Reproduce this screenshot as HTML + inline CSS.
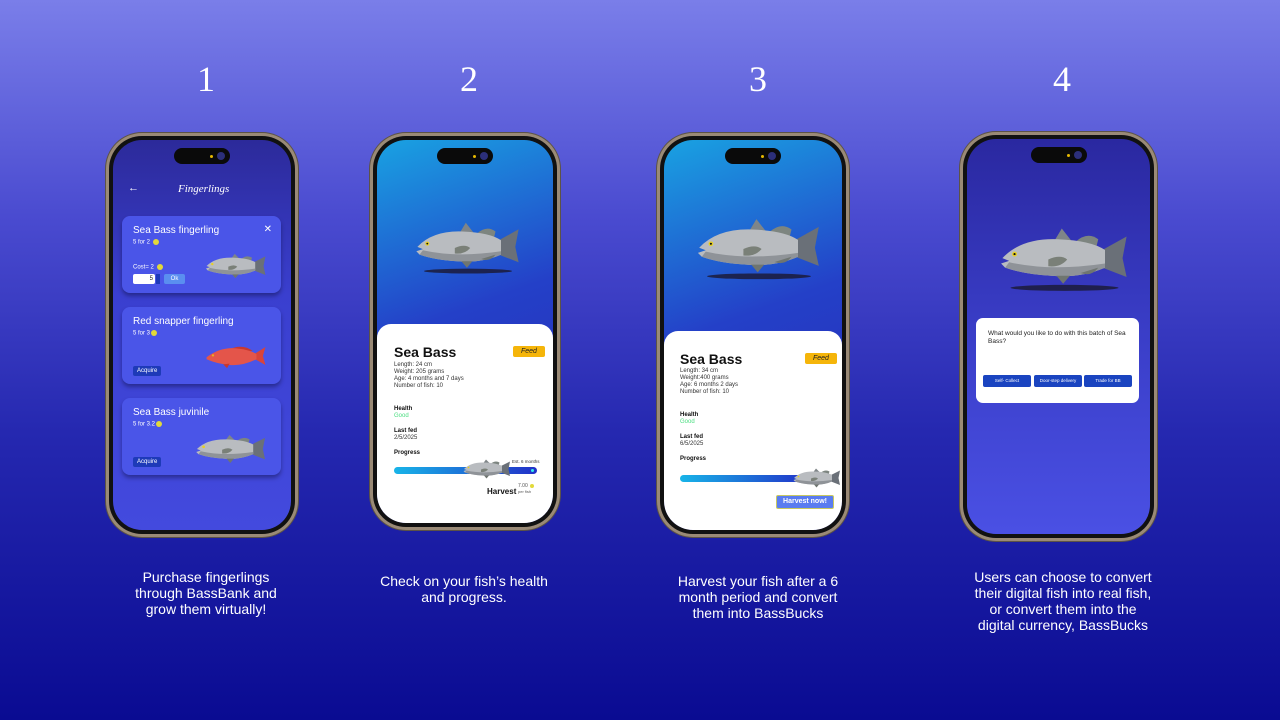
<!DOCTYPE html>
<html><head><meta charset="utf-8"><style>
*{margin:0;padding:0;box-sizing:border-box}
body{width:1280px;height:720px;overflow:hidden;position:relative;background:linear-gradient(180deg,#7a7ee9 0%,#4a4bd0 30%,#2528b0 60%,#0a0b92 100%);font-family:"Liberation Sans",sans-serif;color:#fff}
.abs{position:absolute}
.num{position:absolute;font-family:"Liberation Serif",serif;font-size:36px;color:#fff;width:100px;text-align:center;top:58px}
.cap{position:absolute;font-size:14px;line-height:16px;text-align:center;color:#fff;width:240px}
.phone{position:absolute;border-radius:36px;background:#9a8a76;padding:3px;box-shadow:0 0 0 1px #5d5346}
.bez{width:100%;height:100%;border-radius:33px;background:#111;padding:4px}
.scr{width:100%;height:100%;border-radius:29px;overflow:hidden;position:relative}
.island{position:absolute;left:50%;top:8px;width:56px;height:16px;margin-left:-28px;background:#0a0a0a;border-radius:8px}
.island:after{content:"";position:absolute;right:5px;top:4px;width:8px;height:8px;border-radius:50%;background:#2c2f7a}
.island:before{content:"";position:absolute;right:17px;top:6.5px;width:3px;height:3px;border-radius:50%;background:#e6b800}
.card{position:absolute;background:#4a55e8;border-radius:8px;box-shadow:0 3px 4px rgba(0,0,20,.35)}
.card h4{font-weight:normal;font-size:10px;position:absolute;left:11px;top:9px}
.card .s{font-size:6px;position:absolute;left:11px;top:23px}
.coin{display:inline-block;width:6px;height:6px;border-radius:50%;background:#e2d93a;vertical-align:middle;margin-left:1px}
.btn{position:absolute;background:#1e3ab8;font-size:6px;padding:2px 4px;border-radius:2px}
.wc{position:absolute;left:0;right:0;bottom:0;background:#fff;border-radius:14px 14px 0 0;color:#111}
.wc b.t{position:absolute;font-size:14px;font-weight:bold}
.wc .feed{position:absolute;background:#f5b50a;font-size:7px;font-style:italic;color:#222;padding:2px 8px;border-radius:2px}
.sm{position:absolute;font-size:6px;line-height:7px;color:#333}
.lb{position:absolute;font-size:6px;font-weight:bold;color:#111}
.good{color:#4ade80}
</style></head><body>
<svg width="0" height="0" style="position:absolute"><defs>
<symbol id="fish" viewBox="0 0 100 50">
<ellipse cx="50" cy="46" rx="40" ry="2.2" fill="#1b1b3a" opacity=".85"/>
<path d="M42 12 L48 2 L55 11Z" fill="#7f8588"/>
<path d="M58 12 Q67 4 75 10 L73 18Z" fill="#7d8580"/>
<path d="M78 18 L96 8 L93 24 L96 38 L78 31Z" fill="#6a7078"/>
<path d="M4 24 Q18 9 45 10 Q70 11 80 18 L80 31 Q62 39 40 37 Q20 36 6 31 L3 28 L9 26Z" fill="#b9bcc0"/>
<path d="M9 27 Q40 34 80 28 L80 31 Q62 39 40 37 Q20 36 6 31Z" fill="#8f9398"/>
<path d="M38 25 Q47 21 52 25 Q47 31 38 30Z" fill="#7a8078"/>
<path d="M44 37 L49 43 L54 37Z" fill="#6f7570"/>
<path d="M62 35 Q70 38 75 31Z" fill="#6f7570"/>
<circle cx="13" cy="21" r="1.8" fill="#e8d020"/><circle cx="13" cy="21" r=".8" fill="#111"/>
</symbol>
<symbol id="fishn" viewBox="0 0 100 40">
<path d="M42 9 L48 1 L55 8Z" fill="#7f8588"/>
<path d="M58 9 Q67 2 75 7 L73 14Z" fill="#7d8580"/>
<path d="M78 14 L96 5 L93 20 L96 34 L78 27Z" fill="#6a7078"/>
<path d="M4 20 Q18 6 45 7 Q70 8 80 14 L80 27 Q62 35 40 33 Q20 32 6 27 L3 24 L9 22Z" fill="#b9bcc0"/>
<path d="M9 23 Q40 30 80 24 L80 27 Q62 35 40 33 Q20 32 6 27Z" fill="#8f9398"/>
<path d="M38 21 Q47 17 52 21 Q47 27 38 26Z" fill="#7a8078"/>
<path d="M44 33 L49 39 L54 33Z" fill="#6f7570"/>
<circle cx="13" cy="17" r="1.8" fill="#e8d020"/>
</symbol>
</defs></svg>

<div class="num" style="left:156px">1</div>
<div class="num" style="left:419px">2</div>
<div class="num" style="left:708px">3</div>
<div class="num" style="left:1012px">4</div>

<!-- phone 1 -->
<div class="phone" style="left:106px;top:133px;width:192px;height:404px"><div class="bez"><div class="scr" style="background:linear-gradient(180deg,#2c2a9a 0%,#3a3fcf 40%,#434ade 100%)">
<div class="island"></div>
<div class="abs" style="left:15px;top:42px;font-size:11px">←</div>
<div class="abs" style="left:65px;top:43px;font-size:11px;font-style:italic;font-family:'Liberation Serif',serif">Fingerlings</div>
<div class="card" style="left:9px;top:76px;width:159px;height:77px"><h4>Sea Bass fingerling</h4><div class="s">5 for 2 <span class="coin"></span></div>
<div class="abs" style="right:9px;top:8px;font-size:10px">✕</div>
<div class="abs" style="left:11px;top:48px;font-size:6px">Cost= 2 <span class="coin"></span></div>
<div class="abs" style="left:11px;top:58px;width:22px;height:10px;background:#fff;border-radius:2px;color:#222;font-size:6px;text-align:right;padding-right:2px;line-height:10px">5</div>
<div class="abs" style="left:34px;top:58px;width:4px;height:10px;background:#1e3ab8"></div>
<div class="abs" style="left:42px;top:58px;width:21px;height:10px;background:#5a8ef0;border-radius:2px;font-size:6px;text-align:center;line-height:10px">Ok</div>
<svg class="abs" style="left:82px;top:34px" width="64" height="32"><use href="#fishn" width="64" height="32"/></svg></div>
<div class="card" style="left:9px;top:167px;width:159px;height:77px"><h4>Red snapper fingerling</h4><div class="s">5 for 3<span class="coin"></span></div>
<svg class="abs" style="left:82px;top:32px" width="64" height="34" viewBox="0 0 100 40"><path d="M80 16 L96 6 L92 20 L96 34 L80 25Z" fill="#d9443a"/><path d="M38 10 Q60 0 76 12 L60 14Z" fill="#c8382f"/><path d="M4 22 Q25 6 50 8 Q72 10 82 17 L82 25 Q60 36 40 34 Q20 32 4 25Z" fill="#e4554a"/><circle cx="14" cy="19" r="1.8" fill="#e8b020"/><path d="M30 33 L36 39 L40 32Z" fill="#c8382f"/></svg>
<div class="btn" style="left:11px;top:59px">Acquire</div></div>
<div class="card" style="left:9px;top:258px;width:159px;height:77px"><h4>Sea Bass juvinile</h4><div class="s">5 for 3.2<span class="coin"></span></div>
<svg class="abs" style="left:72px;top:34px" width="74" height="34"><use href="#fishn" width="74" height="34"/></svg>
<div class="btn" style="left:11px;top:59px">Acquire</div></div>
</div></div></div>

<!-- phone 2 -->
<div class="phone" style="left:370px;top:133px;width:190px;height:397px"><div class="bez"><div class="scr" style="background:linear-gradient(160deg,#19a2e2 0%,#2440c8 45%,#2a24b0 100%)">
<div class="island"></div>
<svg class="abs" style="left:36px;top:66px" width="110" height="84"><use href="#fish" width="110" height="84"/></svg>
<div class="wc" style="top:184px">
<b class="t" style="left:17px;top:20px;font-size:14px">Sea Bass</b>
<div class="feed" style="left:136px;top:22px">Feed</div>
<div class="sm" style="left:17px;top:38px">Length: 24 cm<br>Weight: 205 grams<br>Age: 4 months and 7 days<br>Number of fish: 10</div>
<div class="lb" style="left:17px;top:82px">Health</div><div class="sm good" style="left:17px;top:89px">Good</div>
<div class="lb" style="left:17px;top:104px">Last fed</div><div class="sm" style="left:17px;top:111px">2/5/2025</div>
<div class="lb" style="left:17px;top:126px">Progress</div>
<div class="abs" style="left:135px;top:135px;font-size:4.5px;color:#333">Est. 6 months</div>
<div class="abs" style="left:17px;top:143px;width:143px;height:7px;border-radius:4px;background:linear-gradient(90deg,#18b4e8,#2230c8)"></div>
<div class="abs" style="left:154px;top:145px;width:3px;height:3px;border-radius:50%;background:#3ee"></div>
<svg class="abs" style="left:85px;top:133px" width="50" height="24"><use href="#fishn" width="50" height="24"/></svg>
<div class="abs" style="left:110px;top:163px;font-size:8px;font-weight:bold">Harvest</div>
<div class="abs" style="left:141px;top:159px;font-size:5px;color:#555">7.00 <span class="coin" style="width:4px;height:4px"></span><br><span style="font-size:4px">per fish</span></div>
</div>
</div></div></div>

<!-- phone 3 -->
<div class="phone" style="left:657px;top:133px;width:192px;height:404px"><div class="bez"><div class="scr" style="background:linear-gradient(160deg,#19a2e2 0%,#2440c8 45%,#2a24b0 100%)">
<div class="island"></div>
<svg class="abs" style="left:30px;top:62px" width="130" height="94"><use href="#fish" width="130" height="94"/></svg>
<div class="wc" style="top:191px">
<b class="t" style="left:16px;top:20px">Sea Bass</b>
<div class="feed" style="left:141px;top:22px">Feed</div>
<div class="sm" style="left:16px;top:37px">Length: 34 cm<br>Weight:400 grams<br>Age: 6 months 2 days<br>Number of fish: 10</div>
<div class="lb" style="left:16px;top:81px">Health</div><div class="sm good" style="left:16px;top:88px">Good</div>
<div class="lb" style="left:16px;top:103px">Last fed</div><div class="sm" style="left:16px;top:110px">6/5/2025</div>
<div class="lb" style="left:16px;top:125px">Progress</div>
<div class="abs" style="left:16px;top:144px;width:130px;height:7px;border-radius:4px;background:linear-gradient(90deg,#18b4e8,#2230c8)"></div>
<svg class="abs" style="left:128px;top:135px" width="50" height="24"><use href="#fishn" width="50" height="24"/></svg>
<div class="abs" style="left:112px;top:164px;width:58px;height:14px;background:#5a7cf0;border:1px solid #c8c860;border-radius:2px;font-size:7px;font-weight:bold;color:#fff;text-align:center;line-height:12px">Harvest now!</div>
</div>
</div></div></div>

<!-- phone 4 -->
<div class="phone" style="left:960px;top:132px;width:197px;height:409px"><div class="bez"><div class="scr" style="background:linear-gradient(180deg,#2a28a0 0%,#3a3ec8 50%,#4a50e4 100%)">
<div class="island"></div>
<svg class="abs" style="left:30px;top:71px" width="135" height="99"><use href="#fish" width="135" height="99"/></svg>
<div class="abs" style="left:9px;top:179px;width:163px;height:85px;background:#fff;border-radius:7px;color:#222">
<div class="abs" style="left:12px;top:12px;font-size:6.5px;line-height:8px;width:145px">What would you like to do with this batch of Sea Bass?</div>
<div class="abs" style="left:7px;top:57px;width:48px;height:12px;background:#1a44c0;border-radius:2px;font-size:4.5px;color:#fff;text-align:center;line-height:12px">Self- Collect</div>
<div class="abs" style="left:58px;top:57px;width:48px;height:12px;background:#1a44c0;border-radius:2px;font-size:4.5px;color:#fff;text-align:center;line-height:12px">Door-step delivery</div>
<div class="abs" style="left:108px;top:57px;width:48px;height:12px;background:#1a44c0;border-radius:2px;font-size:4.5px;color:#fff;text-align:center;line-height:12px">Trade for BB</div>
</div>
</div></div></div>

<div class="cap" style="left:86px;top:569px">Purchase fingerlings<br>through BassBank and<br>grow them virtually!</div>
<div class="cap" style="left:344px;top:573px">Check on your fish’s health<br>and progress.</div>
<div class="cap" style="left:638px;top:573px">Harvest your fish after a 6<br>month period and convert<br>them into BassBucks</div>
<div class="cap" style="left:943px;top:569px">Users can choose to convert<br>their digital fish into real fish,<br>or convert them into the<br>digital currency, BassBucks</div>
</body></html>
